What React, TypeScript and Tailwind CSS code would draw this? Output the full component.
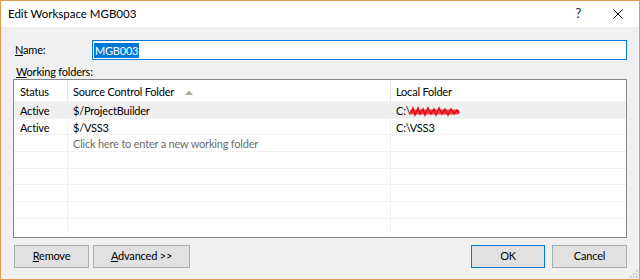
import React from 'react';

const FONT = "font-['Lato',sans-serif]";

const rows = [
  { status: 'Active', source: '$/ProjectBuilder', local: 'C:\\', redacted: true, selected: true },
  { status: 'Active', source: '$/VSS3', local: 'C:\\VSS3' },
  { status: '', source: 'Click here to enter a new working folder', local: '', hint: true },
  { status: '', source: '', local: '' },
  { status: '', source: '', local: '' },
  { status: '', source: '', local: '' },
  { status: '', source: '', local: '' },
  { status: '', source: '', local: '' },
];

// red scribble covering the redacted folder name
function Scribble() {
  return (
    <svg width="50" height="11" viewBox="0 0 50 11" className="inline-block">
      <path d="M2 6 L47 6" stroke="#f04046" strokeWidth="5" fill="none" strokeLinecap="round" />
      <path
        d="M1 7 L3 2 L5 9 L8 2 L10 8 L13 3 L15 9 L18 2 L21 8 L24 3 L26 9 L29 2 L32 8 L35 3 L38 9 L41 3 L44 8 L47 4 L49 7"
        stroke="#e0101a"
        strokeWidth="1.5"
        fill="none"
      />
    </svg>
  );
}

function Btn({ children, primary, className }: { children: React.ReactNode; primary?: boolean; className?: string }) {
  return (
    <button
      className={`h-[23px] bg-[#e1e1e1] border text-[11px] text-black flex items-center justify-center ${
        primary ? 'border-[#0078d7]' : 'border-[#adadad]'
      } ${className ?? ''}`}
    >
      {children}
    </button>
  );
}

export default function App() {
  return (
    <div
      className={`w-[640px] h-[280px] border border-[#e39b4a] flex flex-col ${FONT} text-[11px] tracking-[-0.2px] text-black`}
    >
      {/* title bar */}
      <div className="h-[26px] bg-white flex items-center pl-[7px]">
        <span className="text-[11.5px] tracking-normal">Edit Workspace MGB003</span>
        <span className="ml-auto mr-[32px] text-[13px] text-[#222]">?</span>
        <svg width="10" height="10" viewBox="0 0 10 10" className="mr-[16px]">
          <path d="M0.5 0.5 L9.5 9.5 M9.5 0.5 L0.5 9.5" stroke="#111" strokeWidth="1" />
        </svg>
      </div>

      <div className="flex-1 bg-[#f0f0f0] flex flex-col pl-[12px] pr-[12px] pt-[13px] relative">
        <div className="flex items-center h-[20px]">
          <label className="w-[79px] pl-[2px]">
            <span className="underline">N</span>ame:
          </label>
          <div className="flex-1 h-[20px] bg-white border border-[#0078d7] flex items-center pl-[1px]">
            <span className="bg-[#0078d7] text-white px-[1px] leading-[15px]">MGB003</span>
          </div>
        </div>

        <div className="mt-[4px] pl-[3px] leading-[15px] h-[15px]">
          <span className="underline">W</span>orking folders:
        </div>

        <div className="h-[159px] bg-white border border-[#828790] flex flex-col overflow-hidden">
          <div className="flex h-[21px] items-center shrink-0">
            <div className="w-[54px] pl-[6px] pt-[3px] border-r border-[#e5e5e5] h-full flex items-center">Status</div>
            <div className="w-[323px] pl-[5px] pt-[3px] border-r border-[#e5e5e5] h-full flex items-center">
              Source Control Folder
              <svg width="8" height="5" viewBox="0 0 8 5" className="ml-[11px]">
                <path d="M0 5 L4 0.5 L8 5 Z" fill="#a8a898" />
              </svg>
            </div>
            <div className="flex-1 pl-[5px] pt-[3px] h-full flex items-center">Local Folder</div>
          </div>
          {rows.map((r, i) => (
            <div
              key={i}
              className={`flex h-[16.67px] shrink-0 items-center border-t border-[#f0f0f0] ${
                r.selected ? 'bg-[#efefef]' : ''
              }`}
            >
              <div className="w-[54px] pl-[6px] pt-[3px] h-full flex items-center border-r border-[#f0f0f0]">
                {r.status}
              </div>
              <div
                className={`w-[323px] pl-[5px] pt-[3px] h-full flex items-center border-r border-[#f0f0f0] ${
                  r.hint ? 'text-[#6d6d6d]' : ''
                }`}
              >
                {r.source}
              </div>
              <div className="flex-1 pl-[5px] pt-[3px] h-full flex items-center mr-[2px]">
                {r.local}
                {r.redacted && <Scribble />}
              </div>
            </div>
          ))}
        </div>

        <div className="flex mt-[7px] pl-[1px]">
          <Btn className="w-[75px]">
            <span>
              <span className="underline">R</span>emove
            </span>
          </Btn>
          <Btn className="w-[97px] ml-[4px]">
            <span>
              <span className="underline">A</span>dvanced &gt;&gt;
            </span>
          </Btn>
          <Btn primary className="w-[74px] ml-auto">
            OK
          </Btn>
          <Btn className="w-[75px] ml-[7px]">Cancel</Btn>
        </div>

        <svg width="8" height="8" viewBox="0 0 8 8" className="absolute right-[1px] bottom-[1px]">
          <rect x="6" y="0" width="1.5" height="1.5" fill="#bcbcbc" />
          <rect x="3" y="3" width="1.5" height="1.5" fill="#bcbcbc" />
          <rect x="6" y="3" width="1.5" height="1.5" fill="#bcbcbc" />
          <rect x="0" y="6" width="1.5" height="1.5" fill="#bcbcbc" />
          <rect x="3" y="6" width="1.5" height="1.5" fill="#bcbcbc" />
          <rect x="6" y="6" width="1.5" height="1.5" fill="#bcbcbc" />
        </svg>
      </div>
    </div>
  );
}
